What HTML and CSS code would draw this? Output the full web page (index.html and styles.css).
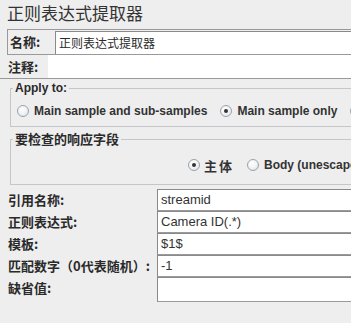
FILE: index.html
```html
<!DOCTYPE html>
<html lang="zh-CN">
<head>
  <meta charset="UTF-8">
  <title>正则表达式提取器</title>
  <link rel="stylesheet" href="styles.css">
</head>
<body>
  <div class="panel">
    <div class="panel-title">正则表达式提取器</div>

    <!-- name / comment -->
    <div class="name-row">
      <span class="label">名称:</span>
      <div class="field">正则表达式提取器</div>
    </div>
    <div class="comment-row">
      <span class="label">注释:</span>
      <div class="comment-field"></div>
    </div>

    <!-- Apply to -->
    <fieldset class="group apply-group">
      <legend class="legend-en">Apply to:</legend>
      <div class="radio-row">
        <label class="radio"><span class="dot"></span>Main sample and sub-samples</label>
        <label class="radio"><span class="dot checked"></span>Main sample only</label>
        <label class="radio"><span class="dot"></span>Sub-samples only</label>
      </div>
    </fieldset>

    <!-- response field -->
    <fieldset class="group field-group">
      <legend class="legend-cn">要检查的响应字段</legend>
      <div class="radio-row right">
        <label class="radio cn"><span class="dot checked"></span>主体</label>
        <label class="radio"><span class="dot"></span>Body (unescaped)</label>
      </div>
    </fieldset>

    <!-- extractor settings -->
    <div class="settings">
      <span class="label">引用名称:</span>
      <div class="input">streamid</div>
      <span class="label">正则表达式:</span>
      <div class="input">Camera ID(.*)</div>
      <span class="label">模板:</span>
      <div class="input">$1$</div>
      <span class="label">匹配数字（0代表随机）:</span>
      <div class="input">-1</div>
      <span class="label">缺省值:</span>
      <div class="input tall"></div>
    </div>
  </div>
</body>
</html>
```

FILE: styles.css
```css
:root {
  --bg: #eeeeee;
  --text: #2a2a2a;
  --field-border: #8a8a8a;
  --group-border: #c4c7ca;
  --cn: "Noto Sans CJK SC", "Liberation Sans", sans-serif;
  --en: "Liberation Sans", "Noto Sans CJK SC", sans-serif;
}
html, body {
  margin: 0;
  padding: 0;
  background: var(--bg);
  overflow: hidden;
  height: 100%;
}
.panel {
  width: 600px;
  color: var(--text);
  font-family: var(--cn);
}
.panel-title {
  height: 29px;
  padding-left: 7px;
  font-size: 17px;
  line-height: 26px;
  color: #333;
}
.label {
  font-size: 13px;
  font-weight: 700;
  line-height: 20px;
  white-space: nowrap;
}
/* name + comment */
.name-row {
  display: flex;
  align-items: stretch;
  margin-left: 7px;
  height: 24px;
  border: 1px solid #999;
  border-right: none;
}
.name-row .label {
  width: 45px;
  padding-left: 2px;
  line-height: 24px;
}
.field {
  flex: 1;
  margin-top: 1px;
  background: #fff;
  border-top: 1px solid var(--field-border);
  border-left: 1px solid var(--field-border);
  padding-left: 3px;
  font-size: 12px;
  line-height: 21px;
}
.comment-row {
  display: flex;
  height: 23px;
  border-bottom: 1px solid #999;
}
.comment-row .label {
  width: 40px;
  padding-left: 8px;
  line-height: 24px;
}
.comment-field {
  flex: 1;
  background: #fff;
}
/* groups */
.group {
  margin: 1px 0 0 10px;
  padding: 0 0 0 6px;
  border: 1px solid var(--group-border);
  border-right: none;
  min-width: 0;
}
.legend-en {
  padding: 0 2px;
  margin-left: -4px;
  font-family: var(--en);
  font-size: 12px;
  font-weight: 700;
  line-height: 16px;
}
.legend-cn {
  padding: 0 2px;
  margin-left: -4px;
  font-size: 13px;
  font-weight: 700;
  line-height: 18px;
}
.apply-group {
  padding-top: 7px;
  padding-bottom: 7px;
}
.field-group {
  margin-top: 3px;
  padding-top: 9px;
  padding-bottom: 11px;
}
.radio-row {
  display: flex;
  gap: 13px;
  height: 16px;
  white-space: nowrap;
}
.radio-row.right {
  padding-left: 171px;
  gap: 13px;
}
.radio {
  display: flex;
  align-items: center;
  gap: 5px;
  font-family: var(--en);
  font-size: 12px;
  font-weight: 700;
  color: #333;
}
.radio.cn {
  font-family: var(--cn);
  font-size: 13px;
  gap: 4px;
  letter-spacing: 2px;
}
.dot {
  width: 10px;
  height: 10px;
  border-radius: 50%;
  border: 1px solid #9aa3ad;
  background: radial-gradient(circle at 40% 35%, #fff 0%, #eef1f4 55%, #d3d9df 100%);
  flex: none;
  position: relative;
}
.dot.checked::after {
  content: "";
  position: absolute;
  left: 3px;
  top: 3px;
  width: 4px;
  height: 4px;
  border-radius: 50%;
  background: #333;
}
/* settings grid */
.settings {
  display: grid;
  grid-template-columns: 157px 1fr;
  grid-template-rows: 22px 22px 22px 22px 25px;
  margin-top: 4px;
}
.settings .label {
  padding-left: 8px;
  line-height: 22px;
}
.input {
  background: #fff;
  border-top: 1px solid var(--field-border);
  border-left: 1px solid var(--field-border);
  border-bottom: 1px solid #9a9a9a;
  padding-left: 3px;
  font-family: var(--en);
  font-size: 13px;
  line-height: 20px;
  color: #333;
}
```
